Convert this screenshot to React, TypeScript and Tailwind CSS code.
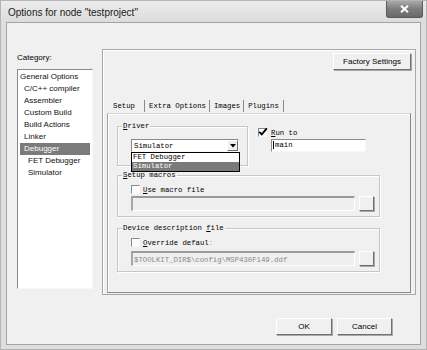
import React from 'react';

const mono = "font-['Liberation_Mono',monospace] text-[7.3px] leading-[10px] text-black";
const sans = "font-['Liberation_Sans',Arial,sans-serif]";

const categories = [
    { label: 'General Options', pad: 'pl-0' },
    { label: 'C/C++ compiler', pad: 'pl-[4px]' },
    { label: 'Assembler', pad: 'pl-[4px]' },
    { label: 'Custom Build', pad: 'pl-[4px]' },
    { label: 'Build Actions', pad: 'pl-[4px]' },
    { label: 'Linker', pad: 'pl-[4px]' },
    { label: 'Debugger', pad: 'pl-[4px]', selected: true },
    { label: 'FET Debugger', pad: 'pl-[8px]' },
    { label: 'Simulator', pad: 'pl-[8px]' },
];

const raised = 'border border-t-white border-l-white border-b-[#6f6f6f] border-r-[#6f6f6f] shadow-[1px_1px_0_#a9a9a9] bg-[#f0f0f0]';
const sunken = 'border border-t-[#8a8a8a] border-l-[#8a8a8a] border-b-[#f8f8f8] border-r-[#f8f8f8]';

function Check({ checked }: { checked?: boolean }) {
    return (
        <span className={`relative block w-[9px] h-[9px] shrink-0 bg-[#fbfbfb] ${sunken}`}>
            {checked && (
                <svg className="absolute -left-[1px] -top-[2px]" width="10" height="10" viewBox="0 0 10 10">
                    <path d="M1.2 4.8 L3.8 7.4 L8.8 1.4" stroke="#000" strokeWidth="1.9" fill="none" />
                </svg>
            )}
        </span>
    );
}

function Group({ title, className, children }: { title: React.ReactNode; className: string; children?: React.ReactNode }) {
    return (
        <div className={`relative border border-[#c6c6c6] shadow-[inset_1px_1px_0_#fff,1px_1px_0_#fff] ${className}`}>
            <span className={`absolute -top-[6px] left-[4px] bg-[#f0f0f0] px-[1px] ${mono}`}>{title}</span>
            {children}
        </div>
    );
}

function PathField({ text }: { text?: string }) {
    return (
        <div className="flex items-start gap-[4px]">
            <div className={`w-[224px] h-[15px] bg-[#efefef] pl-[1px] pt-[2px] overflow-hidden whitespace-nowrap border-t-2 border-l-2 border-b border-r border-t-[#9a9a9a] border-l-[#a6a6a6] border-b-white border-r-white ${mono} !text-[#8a8a8a]`}>
                {text}
            </div>
            <div className={`w-[15px] h-[15px] ${raised}`} />
        </div>
    );
}

export default function App() {
    return (
        <div className={`w-[427px] h-[350px] bg-[#dedede] border border-[#b4b4b4] overflow-hidden ${sans}`}>
            {/* title bar */}
            <div className="h-[21px] flex items-start bg-gradient-to-b from-[#ececec] to-[#dcdcdc]">
                <span className="pl-[7px] pt-[6px] text-[10px] leading-[12px] text-[#1a1a1a]">Options for node "testproject"</span>
                <div className="ml-auto mr-[3px] w-[37px] h-[17px] rounded-b-[3px] border border-t-0 border-[#5a5a5a] bg-gradient-to-b from-[#a9a9a9] via-[#7d7d7d] to-[#6a6a6a] flex items-center justify-center">
                    <svg width="9" height="8" viewBox="0 0 9 8">
                        <path d="M1 0.8 L8 7.2 M8 0.8 L1 7.2" stroke="#fff" strokeWidth="2" />
                    </svg>
                </div>
            </div>

            {/* client */}
            <div className="mx-[5px] h-[323px] bg-[#f0f0f0] border border-[#a3a3a3] flex flex-col">
                <div className="flex items-start pl-[10px]">
                    <div className="flex flex-col pt-[29px]">
                        <span className="text-[8px] leading-[12px] text-black">Category:</span>
                        <div className={`mt-[5px] w-[76px] h-[220px] bg-white pt-[1px] ${sunken}`}>
                            {categories.map((c) => (
                                <div
                                    key={c.label}
                                    className={`mx-[2px] h-[12px] text-[8px] leading-[12px] whitespace-nowrap ${c.pad} ${c.selected ? 'bg-[#7b7b7b] text-white' : 'text-[#111]'}`}
                                >
                                    {c.label}
                                </div>
                            ))}
                        </div>
                    </div>

                    <div className="ml-[9px] mt-[26px] w-[314px] h-[246px] border border-[#a8a8a8] shadow-[inset_1px_1px_0_#fff] flex flex-col">
                        <button className={`self-end mr-[4px] mt-[3px] w-[78px] h-[17px] text-[8px] leading-[15px] text-black ${raised}`}>
                            Factory Settings
                        </button>

                        <div className={`mt-[30px] ml-[10px] h-[13px] flex items-start ${mono}`}>
                            <span className="w-[31px] pt-[1px]">Setup</span>
                            <span className="border-l border-l-[#8a8a8a] pl-[4px] pr-[3px] pt-[1px] h-[12px]">Extra Options</span>
                            <span className="border-l border-l-[#8a8a8a] pl-[4px] pr-[3px] pt-[1px] h-[12px]">Images</span>
                            <span className="border-l border-l-[#8a8a8a] pl-[4px] pr-[4px] pt-[1px] h-[12px]">Plugins</span>
                            <span className="border-l border-l-[#8a8a8a] h-[12px]" />
                        </div>

                        <div className="mx-[4px] h-[180px] border border-t-[#d4d4d4] border-l-[#a4a4a4] border-b-[#8a8a8a] border-r-[#8a8a8a] shadow-[inset_1px_1px_0_#fff] flex flex-col">
                            <div className="flex items-start pl-[9px] pt-[12px]">
                                <Group title={<><span className="underline">D</span>river</>} className="w-[131px] h-[40px] pl-[13px] pt-[12px]">
                                    <div className="relative w-[108px]">
                                        <div className={`h-[13px] bg-white flex items-center ${sunken}`}>
                                            <span className={`pl-[2px] ${mono}`}>Simulator</span>
                                            <span className={`ml-auto w-[11px] h-[11px] flex items-center justify-center ${raised} !shadow-none`}>
                                                <svg width="6" height="4" viewBox="0 0 6 4">
                                                    <path d="M0 0 H6 L3 3.5 Z" fill="#000" />
                                                </svg>
                                            </span>
                                        </div>
                                        <div className={`absolute top-full left-0 w-[109px] bg-white border border-black z-10 ${mono}`}>
                                            <div className="h-[9px] leading-[9px] pl-[1px]">FET Debugger</div>
                                            <div className="h-[9px] leading-[9px] pl-[1px] bg-[#7a7a7a] !text-white">Simulator</div>
                                        </div>
                                    </div>
                                </Group>

                                <div className="ml-[10px] pt-[2px] flex flex-col">
                                    <div className="flex items-center gap-[4px] h-[9px]">
                                        <Check checked />
                                        <span className={mono}><span className="underline">R</span>un to</span>
                                    </div>
                                    <div className={`mt-[2px] ml-[13px] w-[95px] h-[13px] bg-white pl-[1px] ${sunken} ${mono}`}>
                                        <span className="border-l border-l-black pl-[1px]">main</span>
                                    </div>
                                </div>
                            </div>

                            <Group title={<><span className="underline">S</span>etup macros</>} className="ml-[9px] mt-[9px] w-[263px] h-[42px] pl-[13px] pt-[9px]">
                                <div className="flex items-center gap-[3px] h-[9px]">
                                    <Check />
                                    <span className={mono}><span className="underline">U</span>se macro file</span>
                                </div>
                                <div className="mt-[2px]">
                                    <PathField />
                                </div>
                            </Group>

                            <Group title={<>Device description <span className="underline">f</span>ile</>} className="ml-[9px] mt-[11px] w-[263px] h-[44px] pl-[13px] pt-[9px]">
                                <div className="flex items-center gap-[3px] h-[9px]">
                                    <Check />
                                    <span className={mono}><span className="underline">O</span>verride defaul<span className="text-[#aaa]">:</span></span>
                                </div>
                                <div className="mt-[4px]">
                                    <PathField text="$TOOLKIT_DIR$\config\MSP430F149.ddf" />
                                </div>
                            </Group>
                        </div>
                    </div>
                </div>

                <div className="mt-[23px] flex justify-end gap-[5px] pr-[28px]">
                    <button className={`w-[56px] h-[17px] text-[8px] leading-[15px] text-black ${raised}`}>OK</button>
                    <button className={`w-[55px] h-[17px] text-[8px] leading-[15px] text-black ${raised}`}>Cancel</button>
                </div>
            </div>
        </div>
    );
}
